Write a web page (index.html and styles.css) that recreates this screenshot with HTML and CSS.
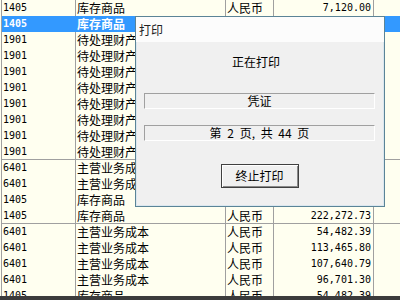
FILE: index.html
```html
<!DOCTYPE html>
<html>
<head>
<meta charset="utf-8">
<link rel="stylesheet" href="styles.css">
</head>
<body>
<div class="window">
  <div class="grid">
    <div class="row"><span class="c code">1405</span><span class="c name">库存商品</span><span class="c cur">人民币</span><span class="c amt">7,120.00</span><span class="c rest"></span></div>
    <div class="row sel"><span class="c code">1405</span><span class="c name">库存商品</span><span class="c cur"></span><span class="c amt"></span><span class="c rest"></span></div>
    <div class="row"><span class="c code">1901</span><span class="c name">待处理财产</span><span class="c cur"></span><span class="c amt"></span><span class="c rest"></span></div>
    <div class="row"><span class="c code">1901</span><span class="c name">待处理财产</span><span class="c cur"></span><span class="c amt"></span><span class="c rest"></span></div>
    <div class="row"><span class="c code">1901</span><span class="c name">待处理财产</span><span class="c cur"></span><span class="c amt"></span><span class="c rest"></span></div>
    <div class="row"><span class="c code">1901</span><span class="c name">待处理财产</span><span class="c cur"></span><span class="c amt"></span><span class="c rest"></span></div>
    <div class="row"><span class="c code">1901</span><span class="c name">待处理财产</span><span class="c cur"></span><span class="c amt"></span><span class="c rest"></span></div>
    <div class="row"><span class="c code">1901</span><span class="c name">待处理财产</span><span class="c cur"></span><span class="c amt"></span><span class="c rest"></span></div>
    <div class="row"><span class="c code">1901</span><span class="c name">待处理财产</span><span class="c cur"></span><span class="c amt"></span><span class="c rest"></span></div>
    <div class="row group"><span class="c code">1901</span><span class="c name">待处理财产</span><span class="c cur"></span><span class="c amt"></span><span class="c rest"></span></div>
    <div class="row"><span class="c code">6401</span><span class="c name">主营业务成</span><span class="c cur"></span><span class="c amt"></span><span class="c rest"></span></div>
    <div class="row"><span class="c code">6401</span><span class="c name">主营业务成</span><span class="c cur"></span><span class="c amt"></span><span class="c rest"></span></div>
    <div class="row"><span class="c code">1405</span><span class="c name">库存商品</span><span class="c cur"></span><span class="c amt"></span><span class="c rest"></span></div>
    <div class="row group"><span class="c code">1405</span><span class="c name">库存商品</span><span class="c cur">人民币</span><span class="c amt">222,272.73</span><span class="c rest"></span></div>
    <div class="row"><span class="c code">6401</span><span class="c name">主营业务成本</span><span class="c cur">人民币</span><span class="c amt">54,482.39</span><span class="c rest"></span></div>
    <div class="row"><span class="c code">6401</span><span class="c name">主营业务成本</span><span class="c cur">人民币</span><span class="c amt">113,465.80</span><span class="c rest"></span></div>
    <div class="row"><span class="c code">6401</span><span class="c name">主营业务成本</span><span class="c cur">人民币</span><span class="c amt">107,640.79</span><span class="c rest"></span></div>
    <div class="row"><span class="c code">6401</span><span class="c name">主营业务成本</span><span class="c cur">人民币</span><span class="c amt">96,701.30</span><span class="c rest"></span></div>
    <div class="row"><span class="c code">1405</span><span class="c name">库存商品</span><span class="c cur">人民币</span><span class="c amt">54,482.39</span><span class="c rest"></span></div>
  </div>
  <div class="statusbar"></div>

  <div class="dialog">
    <div class="titlebar">打印</div>
    <div class="dbody">
      <div class="status">正在打印</div>
      <div class="field">凭证</div>
      <div class="field second">第 2 页, 共 44 页</div>
      <div class="btn">终止打印</div>
    </div>
  </div>
</div>
</body>
</html>
```

FILE: styles.css
```css
html, body {
  margin: 0;
  padding: 0;
  background: #fffff0;
}
.window {
  width: 400px;
  height: 300px;
  display: flex;
  flex-direction: column;
  overflow: hidden;
  position: relative;
  background: #fffff0;
}
.grid {
  flex: 1;
  overflow: hidden;
  margin-left: 1px;
  border-left: 1px solid #a0a0a0;
}
.row {
  display: grid;
  grid-template-columns: 74px 150px 48px 100px 1fr;
  height: 16px;
  box-sizing: border-box;
  color: #000;
}
.row.group {
  border-bottom: 1px solid #a0a0a0;
}
.c {
  box-sizing: border-box;
  border-right: 1px solid #a0a0a0;
  white-space: nowrap;
  overflow: hidden;
  line-height: 16px;
  height: 16px;
}
.row.group .c {
  height: 15px;
  line-height: 16px;
}
.code {
  font-family: "DejaVu Sans Mono", monospace;
  font-size: 10px;
  padding-left: 1px;
}
.name, .cur {
  font-family: "Noto Sans CJK SC", sans-serif;
  font-size: 12px;
  padding-left: 1px;
}
.amt {
  font-family: "DejaVu Sans Mono", monospace;
  font-size: 10px;
  text-align: right;
  padding-right: 2px;
}
.rest {
  border-right: none;
}
.row.sel {
  background: #3399ff;
  color: #fff;
  font-weight: bold;
}
.row.sel .c {
  border-right-color: #3399ff;
}
.statusbar {
  height: 4px;
  background: #3c3c3c;
  flex: none;
}
.dialog {
  position: absolute;
  left: 135px;
  top: 16px;
  width: 250px;
  height: 191px;
  box-sizing: border-box;
  border: 1px solid #5b8497;
  background: #f0f0f0;
  display: flex;
  flex-direction: column;
  font-family: "Noto Sans CJK SC", sans-serif;
  font-size: 12px;
  color: #000;
  box-shadow: inset 0 0 0 1px #dbe7ef;
}
.titlebar {
  height: 25px;
  line-height: 25px;
  padding-left: 3px;
  background: #fcfcfc;
  color: #222;
  flex: none;
}
.dbody {
  flex: 1;
  display: flex;
  flex-direction: column;
  align-items: stretch;
  padding: 0 9px 0 8px;
}
.status {
  margin-top: 12px;
  height: 16px;
  line-height: 16px;
  text-align: center;
  padding-right: 7px;
}
.field {
  margin-top: 23px;
  height: 16px;
  box-sizing: border-box;
  border-top: 1px solid #a0a0a0;
  border-left: 1px solid #a0a0a0;
  border-bottom: 1px solid #ffffff;
  border-right: 1px solid #ffffff;
  line-height: 14px;
  text-align: center;
  white-space: pre;
}
.field.second {
  margin-top: 16px;
  word-spacing: 3px;
}
.btn {
  margin-top: 23px;
  align-self: center;
  width: 78px;
  height: 24px;
  box-sizing: border-box;
  border: 1px solid #404040;
  background: #f0f0f0;
  box-shadow: inset 1px 1px 0 #ffffff, inset -1px -1px 0 #8a8a8a;
  line-height: 22px;
  text-align: center;
}
```
